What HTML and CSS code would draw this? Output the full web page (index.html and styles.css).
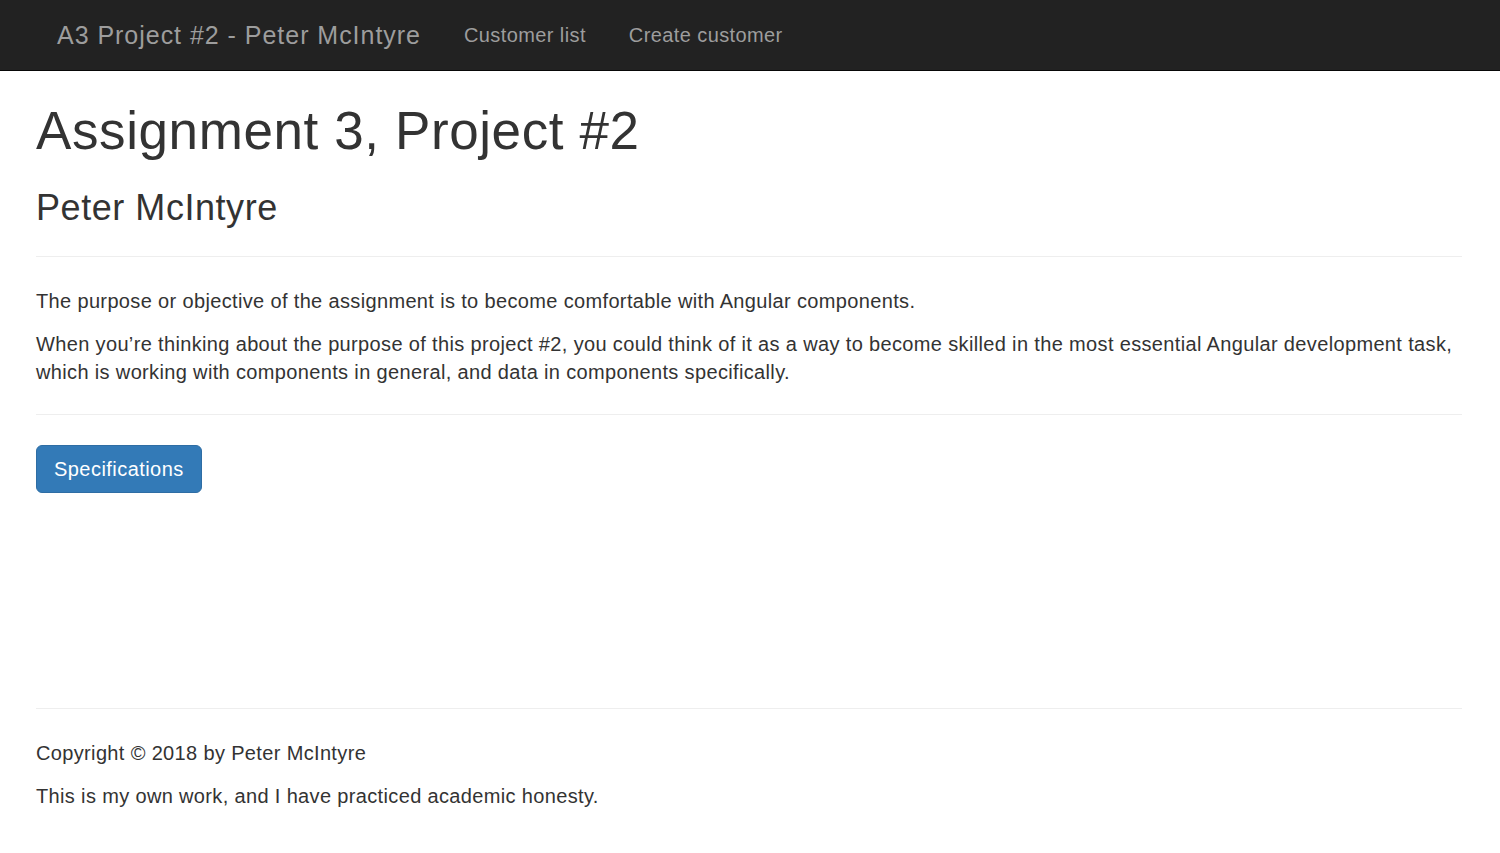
FILE: index.html
```html
<!DOCTYPE html>
<html lang="en">
<head>
<meta charset="utf-8">
<title>A3 Project #2 - Peter McIntyre</title>
<link rel="stylesheet" href="styles.css">
</head>
<body>
<nav class="navbar">
  <a class="brand" href="#">A3 Project #2 - Peter McIntyre</a>
  <ul class="nav-links">
    <li><a href="#">Customer list</a></li>
    <li><a href="#">Create customer</a></li>
  </ul>
</nav>
<main class="container">
  <h1 class="title">Assignment 3, Project #2</h1>
  <h3 class="subtitle">Peter McIntyre</h3>
  <hr class="rule">
  <p class="text">The purpose or objective of the assignment is to become comfortable with Angular components.</p>
  <p class="text">When you’re thinking about the purpose of this project #2, you could think of it as a way to become skilled in the most essential Angular development task, which is working with components in general, and data in components specifically.</p>
  <hr class="rule">
  <div class="actions">
    <a class="btn-primary" href="#">Specifications</a>
  </div>
  <footer class="footer">
    <hr class="rule">
    <p class="text">Copyright © 2018 by Peter McIntyre</p>
    <p class="text">This is my own work, and I have practiced academic honesty.</p>
  </footer>
</main>
</body>
</html>
```

FILE: styles.css
```css
* { box-sizing: border-box; }
html, body { margin: 0; padding: 0; }
body {
  font-family: "Liberation Sans", Arial, sans-serif;
  font-size: 20px;
  line-height: 28px;
  letter-spacing: 0.35px;
  color: #333;
  background: #fff;
}
a { text-decoration: none; }

.navbar {
  height: 71px;
  background: #222;
  border-bottom: 1px solid #080808;
  display: flex;
  align-items: center;
  padding-left: 57px;
}
.brand {
  font-size: 25px;
  letter-spacing: 0.97px;
  color: #9d9d9d;
  line-height: 28px;
}
.nav-links {
  list-style: none;
  margin: 0 0 0 43px;
  padding: 0;
  display: flex;
  gap: 43px;
}
.nav-links a {
  color: #9d9d9d;
  font-size: 20px;
  letter-spacing: 0.4px;
}

.container {
  padding: 0 38px 0 36px;
}
.title {
  margin: 31px 0 0;
  font-size: 53px;
  line-height: 58px;
  letter-spacing: 0.6px;
  font-weight: 500;
}
.subtitle {
  margin: 28px 0 0;
  font-size: 36px;
  line-height: 40px;
  letter-spacing: 0.55px;
  font-weight: 500;
}
.rule {
  border: 0;
  border-top: 1px solid #eee;
  margin: 28px 0 30px;
}
.text {
  margin: 0 0 15px;
}
.actions {
  height: 263px;
}
.btn-primary {
  display: inline-block;
  height: 48px;
  padding: 9px 17px 9px 17px;
  width: 166px;
  font-size: 20px;
  line-height: 28px;
  letter-spacing: 0.45px;
  color: #fff;
  background: #337ab7;
  border: 1px solid #2e6da4;
  border-radius: 6px;
}
.footer .rule { margin-top: 0; }
```
